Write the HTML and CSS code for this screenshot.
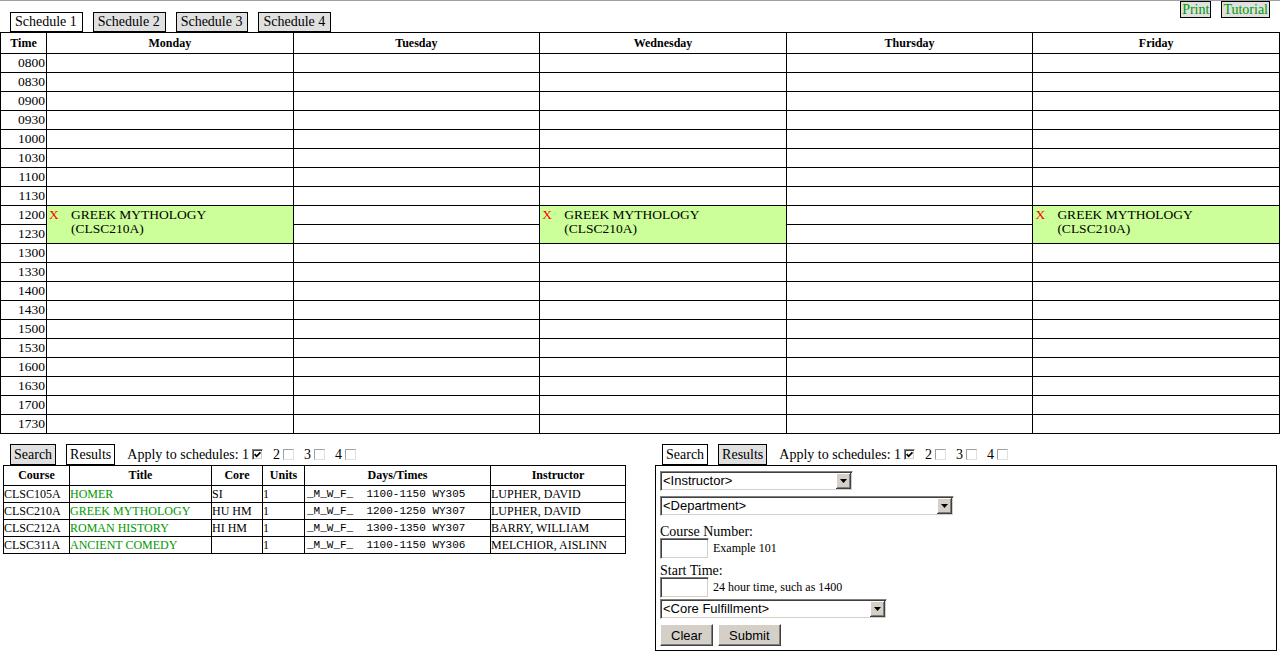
FILE: index.html
```html
<!DOCTYPE html>
<html>
<head>
<meta charset="utf-8">
<title>Schedule</title>
<link rel="stylesheet" href="styles.css">
</head>
<body>
<div class="topbar">
  <div class="tabs">
    <span class="tab on">Schedule 1</span>
    <span class="tab">Schedule 2</span>
    <span class="tab">Schedule 3</span>
    <span class="tab">Schedule 4</span>
  </div>
  <div class="links">
    <a class="link" href="#">Print</a>
    <a class="link" href="#">Tutorial</a>
  </div>
</div>

<table class="cal">
  <colgroup><col class="tcol"><col><col><col><col><col></colgroup>
  <thead>
    <tr><th>Time</th><th>Monday</th><th>Tuesday</th><th>Wednesday</th><th>Thursday</th><th>Friday</th></tr>
  </thead>
  <tbody>
    <tr><td class="tm">0800</td><td></td><td></td><td></td><td></td><td></td></tr>
    <tr><td class="tm">0830</td><td></td><td></td><td></td><td></td><td></td></tr>
    <tr><td class="tm">0900</td><td></td><td></td><td></td><td></td><td></td></tr>
    <tr><td class="tm">0930</td><td></td><td></td><td></td><td></td><td></td></tr>
    <tr><td class="tm">1000</td><td></td><td></td><td></td><td></td><td></td></tr>
    <tr><td class="tm">1030</td><td></td><td></td><td></td><td></td><td></td></tr>
    <tr><td class="tm">1100</td><td></td><td></td><td></td><td></td><td></td></tr>
    <tr><td class="tm">1130</td><td></td><td></td><td></td><td></td><td></td></tr>
    <tr>
      <td class="tm">1200</td>
      <td class="ev" rowspan="2"><div class="ev-in"><span class="ev-x">X</span><span class="ev-t">GREEK MYTHOLOGY<br>(CLSC210A)</span></div></td>
      <td></td>
      <td class="ev" rowspan="2"><div class="ev-in"><span class="ev-x">X</span><span class="ev-t">GREEK MYTHOLOGY<br>(CLSC210A)</span></div></td>
      <td></td>
      <td class="ev" rowspan="2"><div class="ev-in"><span class="ev-x">X</span><span class="ev-t">GREEK MYTHOLOGY<br>(CLSC210A)</span></div></td>
    </tr>
    <tr><td class="tm">1230</td><td></td><td></td></tr>
    <tr><td class="tm">1300</td><td></td><td></td><td></td><td></td><td></td></tr>
    <tr><td class="tm">1330</td><td></td><td></td><td></td><td></td><td></td></tr>
    <tr><td class="tm">1400</td><td></td><td></td><td></td><td></td><td></td></tr>
    <tr><td class="tm">1430</td><td></td><td></td><td></td><td></td><td></td></tr>
    <tr><td class="tm">1500</td><td></td><td></td><td></td><td></td><td></td></tr>
    <tr><td class="tm">1530</td><td></td><td></td><td></td><td></td><td></td></tr>
    <tr><td class="tm">1600</td><td></td><td></td><td></td><td></td><td></td></tr>
    <tr><td class="tm">1630</td><td></td><td></td><td></td><td></td><td></td></tr>
    <tr><td class="tm">1700</td><td></td><td></td><td></td><td></td><td></td></tr>
    <tr><td class="tm">1730</td><td></td><td></td><td></td><td></td><td></td></tr>
  </tbody>
</table>

<div class="bottom">
  <div class="panel panel-l">
    <div class="tabrow">
      <span class="tab tab-s">Search</span>
      <span class="tab tab-s on">Results</span>
      <span class="apply">Apply to schedules:&nbsp;1<span class="cb checked"><svg width="7" height="7" viewBox="0 0 7 7"><path d="M0.6 3.2 L2.6 5.3 L6.4 1.3" fill="none" stroke="#000" stroke-width="1.7"/></svg></span>2<span class="cb"></span>3<span class="cb"></span>4<span class="cb"></span></span>
    </div>
    <table class="res">
      <colgroup><col class="c1"><col class="c2"><col class="c3"><col class="c4"><col class="c5"><col class="c6"></colgroup>
      <thead>
        <tr><th>Course</th><th>Title</th><th>Core</th><th>Units</th><th>Days/Times</th><th>Instructor</th></tr>
      </thead>
      <tbody>
        <tr><td>CLSC105A</td><td><a href="#">HOMER</a></td><td>SI</td><td>1</td><td class="dt">_M_W_F_  1100-1150 WY305</td><td>LUPHER, DAVID</td></tr>
        <tr><td>CLSC210A</td><td><a href="#">GREEK MYTHOLOGY</a></td><td>HU HM</td><td>1</td><td class="dt">_M_W_F_  1200-1250 WY307</td><td>LUPHER, DAVID</td></tr>
        <tr><td>CLSC212A</td><td><a href="#">ROMAN HISTORY</a></td><td>HI HM</td><td>1</td><td class="dt">_M_W_F_  1300-1350 WY307</td><td>BARRY, WILLIAM</td></tr>
        <tr><td>CLSC311A</td><td><a href="#">ANCIENT COMEDY</a></td><td></td><td>1</td><td class="dt">_M_W_F_  1100-1150 WY306</td><td>MELCHIOR, AISLINN</td></tr>
      </tbody>
    </table>
  </div>

  <div class="panel panel-r">
    <div class="tabrow">
      <span class="tab tab-s on">Search</span>
      <span class="tab tab-s">Results</span>
      <span class="apply">Apply to schedules:&nbsp;1<span class="cb checked"><svg width="7" height="7" viewBox="0 0 7 7"><path d="M0.6 3.2 L2.6 5.3 L6.4 1.3" fill="none" stroke="#000" stroke-width="1.7"/></svg></span>2<span class="cb"></span>3<span class="cb"></span>4<span class="cb"></span></span>
    </div>
    <div class="sbox">
      <div class="sel sel-instr"><select><option>&lt;Instructor&gt;</option></select><span class="arrow"><svg width="7" height="4" viewBox="0 0 7 4"><path d="M0 0h7L3.5 4z" fill="#000"/></svg></span></div>
      <div class="sel sel-dept"><select><option>&lt;Department&gt;</option></select><span class="arrow"><svg width="7" height="4" viewBox="0 0 7 4"><path d="M0 0h7L3.5 4z" fill="#000"/></svg></span></div>
      <div class="lbl lbl-1">Course Number:</div>
      <div class="inrow"><input class="txt" type="text"><span class="hint">Example 101</span></div>
      <div class="lbl lbl-2">Start Time:</div>
      <div class="inrow"><input class="txt" type="text"><span class="hint">24 hour time, such as 1400</span></div>
      <div class="sel sel-core"><select><option>&lt;Core Fulfillment&gt;</option></select><span class="arrow"><svg width="7" height="4" viewBox="0 0 7 4"><path d="M0 0h7L3.5 4z" fill="#000"/></svg></span></div>
      <div class="btns"><button class="btn" type="button">Clear</button><button class="btn" type="button">Submit</button></div>
    </div>
  </div>
</div>
</body>
</html>
```

FILE: styles.css
```css
html, body {
  margin: 0;
  padding: 0;
}
body {
  font-family: "Liberation Serif", "Times New Roman", serif;
  font-size: 14px;
  color: #000;
  background: #fff;
  border-top: 1px solid #a0a0a0;
}

/* top bar */
.topbar {
  display: flex;
  justify-content: space-between;
  align-items: flex-start;
  height: 31px;
}
.tabs {
  display: flex;
  gap: 10px;
  padding: 11px 0 0 10px;
}
.tabs .tab {
  line-height: 18px;
  padding: 0 5px 0 4px;
}
.tab {
  display: block;
  border: 1px solid #000;
  background: #e0e0e0;
  line-height: 19px;
  padding: 0 4px;
  font-size: 14px;
  white-space: nowrap;
}
.tab.on {
  background: #fff;
}
.tab-s {
  padding: 0 3px;
}
.links {
  display: flex;
  gap: 10px;
  padding-right: 10px;
}
.link {
  display: block;
  border: 1px solid #000;
  background: #e0e0e0;
  color: #009900;
  line-height: 15px;
  padding: 0 1px;
  text-decoration: none;
}

/* calendar */
.cal {
  width: 1280px;
  border-collapse: collapse;
  table-layout: fixed;
}
.cal col.tcol {
  width: 46px;
}
.cal th {
  border: 1px solid #000;
  height: 20px;
  padding: 0;
  font-size: 12px;
  line-height: 20px;
  font-weight: bold;
}
.cal td {
  border: 1px solid #000;
  height: 18px;
  padding: 0;
  line-height: 18px;
  font-size: 13.5px;
}
.cal td.tm {
  text-align: right;
  padding-right: 1px;
}
.cal td.ev {
  background: #ccff99;
  vertical-align: top;
}
.ev-in {
  display: flex;
  padding-top: 2px;
  line-height: 14px;
}
.ev-x {
  color: #ff0000;
  width: 24px;
  padding-left: 2px;
  box-sizing: border-box;
  flex: none;
}

/* bottom */
.bottom {
  display: flex;
  gap: 30px;
  padding: 10px 0 0 3px;
}
.panel-l {
  width: 622px;
}
.panel-r {
  width: 622px;
}
.tabrow {
  display: flex;
  align-items: center;
  gap: 10px;
  padding-left: 7px;
  height: 21px;
}
.apply {
  display: flex;
  align-items: center;
  margin-left: 2px;
  white-space: nowrap;
}
.cb {
  display: block;
  flex: none;
  width: 11px;
  height: 11px;
  box-sizing: border-box;
  border: 1px solid;
  border-color: #a0a0a0 #e0e0e0 #e0e0e0 #a0a0a0;
  background: #fff;
  margin: 0 10px 0 3px;
}
.cb.checked {
  border-color: #808080 #ffffff #ffffff #808080;
  box-shadow: inset 1px 1px #404040, inset -1px -1px #d4d0c8;
}
.cb svg {
  display: block;
  margin: 1px;
}

/* results table */
.res {
  width: 622px;
  border-collapse: collapse;
  table-layout: fixed;
}
.res col.c1 { width: 66px; }
.res col.c2 { width: 142px; }
.res col.c3 { width: 51px; }
.res col.c4 { width: 42px; }
.res col.c5 { width: 186px; }
.res col.c6 { width: 135px; }
.res th {
  border: 1px solid #000;
  height: 19px;
  padding: 0;
  font-size: 12px;
  line-height: 19px;
  font-weight: bold;
}
.res td {
  border: 1px solid #000;
  height: 16px;
  padding: 0;
  font-size: 12px;
  line-height: 16px;
  white-space: nowrap;
  overflow: hidden;
}
.res a {
  color: #009900;
  text-decoration: none;
}
.res td.dt {
  font-family: "Liberation Mono", "Courier New", monospace;
  font-size: 11px;
  white-space: pre;
  padding-left: 2px;
}

/* search box */
.sbox {
  border: 1px solid #000;
  padding: 5px 4px 4px 4px;
}
.sel {
  display: flex;
  height: 20px;
  box-sizing: border-box;
  border: 1px solid;
  border-color: #808080 #ffffff #ffffff #808080;
  box-shadow: inset 1px 1px #404040, inset -1px -1px #d4d0c8;
  padding: 1px;
  background: #fff;
}
.sel + .sel {
  margin-top: 5px;
}
.sel-instr { width: 193px; }
.sel-dept { width: 294px; }
.sel-core { width: 227px; margin-top: 1px; }
.sel select {
  appearance: none;
  -webkit-appearance: none;
  flex: 1;
  min-width: 0;
  border: 0;
  background: transparent;
  font-family: "Liberation Sans", Arial, sans-serif;
  font-size: 13px;
  height: 16px;
  line-height: 16px;
  padding: 0 0 0 1px;
  margin: 0;
  color: #000;
  outline: none;
}
.arrow {
  flex: none;
  width: 15px;
  height: 16px;
  box-sizing: border-box;
  background: #d4d0c8;
  box-shadow: inset -1px -1px #404040, inset 1px 1px #ffffff, inset -2px -2px #808080;
  display: flex;
  align-items: center;
  justify-content: center;
}
.arrow svg {
  display: block;
}
.lbl {
  line-height: 13px;
  font-size: 14px;
}
.lbl-1 { margin-top: 9px; }
.lbl-2 { margin-top: 5px; }
.inrow {
  display: flex;
  align-items: center;
  height: 21px;
}
.txt {
  width: 49px;
  height: 21px;
  box-sizing: border-box;
  border: 1px solid;
  border-color: #808080 #ffffff #ffffff #808080;
  box-shadow: inset 1px 1px #404040, inset -1px -1px #d4d0c8;
  padding: 0 2px;
  margin: 0;
  background: #fff;
  outline: none;
}
.hint {
  font-size: 12px;
  margin-left: 4px;
}
.btns {
  display: flex;
  gap: 5px;
  margin-top: 5px;
}
.btn {
  height: 22px;
  box-sizing: border-box;
  background: #d4d0c8;
  border: 1px solid;
  border-color: #ffffff #404040 #404040 #ffffff;
  box-shadow: inset -1px -1px #808080;
  font-family: "Liberation Sans", Arial, sans-serif;
  font-size: 13px;
  padding: 0 10px;
  margin: 0;
  color: #000;
}
```
